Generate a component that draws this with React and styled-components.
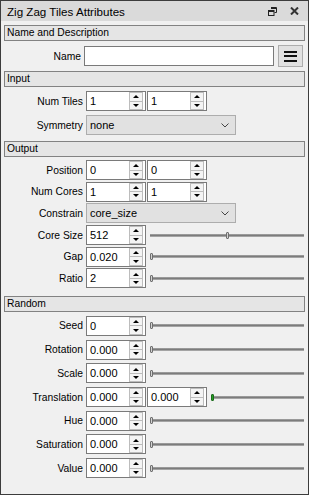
import styled, { createGlobalStyle } from 'styled-components';

const GlobalStyle = createGlobalStyle`
  html, body {
    margin: 0;
    padding: 0;
    background: #f0f0f0;
  }
  body {
    font-family: "Liberation Sans", Arial, sans-serif;
    color: #000;
  }
`;

const Panel = styled.div`
  width: 309px;
  height: 495px;
  box-sizing: border-box;
  border: 1px solid #3c3c3c;
  background: #f0f0f0;
  display: flex;
  flex-direction: column;
  overflow: hidden;
`;

const TitleBar = styled.div`
  height: 20px;
  flex: none;
  display: flex;
  align-items: center;
  padding: 0 9px 0 6px;
  background: #dadada;
  font-size: 11.6px;
`;

const TitleText = styled.div`
  flex: 1;
  white-space: nowrap;
`;

const TitleIcons = styled.div`
  display: flex;
  align-items: center;
  gap: 13px;
`;

const Body = styled.div`
  padding: 4px 3px 0 3px;
  display: flex;
  flex-direction: column;
`;

const SectionHeader = styled.div`
  height: 16px;
  box-sizing: border-box;
  border: 1px solid #828282;
  background: #e5e5e5;
  padding-left: 2px;
  font-size: 10.3px;
  line-height: 14px;
  white-space: nowrap;
`;

const Rows = styled.div`
  display: flex;
  flex-direction: column;
  gap: ${(p) => p.$gap}px;
  padding-top: ${(p) => p.$top}px;
  padding-bottom: ${(p) => p.$bottom}px;
`;

const Row = styled.div`
  display: grid;
  grid-template-columns: ${(p) => p.$labelWidth || 79}px 1fr;
  column-gap: ${(p) => p.$labelGap || 3}px;
  align-items: center;
  height: ${(p) => p.$height || 20}px;
`;

const Label = styled.div`
  text-align: right;
  font-size: 10.3px;
  white-space: nowrap;
`;

const Fields = styled.div`
  display: flex;
  align-items: center;
  gap: 1px;
  margin-right: ${(p) => p.$right || 0}px;
`;

const TextInput = styled.div`
  flex: 1;
  height: 20px;
  box-sizing: border-box;
  border: 1px solid #7a7a7a;
  background: #fff;
`;

const MenuButton = styled.div`
  width: 25px;
  height: 22px;
  box-sizing: border-box;
  margin-left: 3px;
  border: 1px solid #adadad;
  background: #e1e1e1;
  display: flex;
  flex-direction: column;
  align-items: center;
  justify-content: center;
  gap: 2.5px;

  & span {
    display: block;
    width: 13px;
    height: 2px;
    background: #111;
  }
`;

const SpinBox = styled.div`
  width: 60px;
  height: 20px;
  flex: none;
  box-sizing: border-box;
  border: 1px solid #7a7a7a;
  background: #fff;
  display: flex;
`;

const SpinValue = styled.div`
  flex: 1;
  padding-left: 3px;
  font-size: 11px;
  line-height: 18px;
  white-space: nowrap;
`;

const SpinButtons = styled.div`
  width: 14px;
  margin: 0 2px 0 0;
  display: flex;
  flex-direction: column;
`;

const SpinButton = styled.div`
  flex: 1;
  box-sizing: border-box;
  border: 1px solid #bcbcbc;
  background: #f4f4f4;
  display: flex;
  align-items: center;
  justify-content: center;

  & + & {
    border-top: none;
  }

  &::after {
    content: '';
    border-left: 3px solid transparent;
    border-right: 3px solid transparent;
    ${(p) => (p.$down ? 'border-top: 3px solid #000;' : 'border-bottom: 3px solid #000;')}
  }
`;

const Combo = styled.div`
  width: 150px;
  height: 20px;
  box-sizing: border-box;
  border: 1px solid #adadad;
  background: #e1e1e1;
  display: flex;
  align-items: center;
  justify-content: space-between;
  padding: 0 6px 0 3px;
  font-size: 11px;
`;

const Slider = styled.div`
  flex: 1;
  height: 20px;
  margin-left: 3px;
  margin-right: 1px;
  display: flex;
  align-items: center;
`;

const Track = styled.div`
  flex: 1;
  height: 3px;
  position: relative;
  background: linear-gradient(#a8a8a8, #7c7c7c 50%, #b8b8b8);
`;

const Handle = styled.div`
  position: absolute;
  top: -2px;
  width: 3px;
  height: 7px;
  box-sizing: border-box;
  border: 1px solid ${(p) => (p.$active ? '#1d6a1d' : '#6f6f6f')};
  background: ${(p) => (p.$active ? '#23a023' : '#d2d2d2')};
  border-radius: 1px;
`;

function Spin({ value }) {
  return (
    <SpinBox>
      <SpinValue>{value}</SpinValue>
      <SpinButtons>
        <SpinButton />
        <SpinButton $down />
      </SpinButtons>
    </SpinBox>
  );
}

function SliderBar({ pos = 0, active }) {
  return (
    <Slider>
      <Track>
        <Handle $active={active} style={{ left: `calc(${pos} * (100% - 3px))` }} />
      </Track>
    </Slider>
  );
}

function Chevron() {
  return (
    <svg width='8' height='5' viewBox='0 0 8 5'>
      <path d='M0.5 0.5 L4 4 L7.5 0.5' fill='none' stroke='#444' strokeWidth='1' />
    </svg>
  );
}

function RestoreIcon() {
  return (
    <svg width='9' height='9' viewBox='0 0 9 9'>
      <path d='M3 0.5 H8.5 V5.5 H6.5' fill='none' stroke='#222' strokeWidth='1' />
      <path d='M3 1.5 H8' stroke='#222' strokeWidth='1' />
      <rect x='0.5' y='3.5' width='5.5' height='5' fill='none' stroke='#222' strokeWidth='1' />
      <path d='M0.5 4.5 H6' stroke='#222' strokeWidth='1' />
    </svg>
  );
}

function CloseIcon() {
  return (
    <svg width='9' height='8' viewBox='0 0 9 8'>
      <path d='M1 0.5 L8 7.5 M8 0.5 L1 7.5' stroke='#333' strokeWidth='2' />
    </svg>
  );
}

const outputRows = [
  { label: 'Position', values: ['0', '0'] },
  { label: 'Num Cores', values: ['1', '1'] },
  { label: 'Constrain', combo: 'core_size' },
  { label: 'Core Size', values: ['512'], slider: 0.5 },
  { label: 'Gap', values: ['0.020'], slider: 0 },
  { label: 'Ratio', values: ['2'], slider: 0 },
];

const randomRows = [
  { label: 'Seed', values: ['0'], slider: 0 },
  { label: 'Rotation', values: ['0.000'], slider: 0 },
  { label: 'Scale', values: ['0.000'], slider: 0 },
  { label: 'Translation', values: ['0.000', '0.000'], slider: 0, active: true },
  { label: 'Hue', values: ['0.000'], slider: 0 },
  { label: 'Saturation', values: ['0.000'], slider: 0 },
  { label: 'Value', values: ['0.000'], slider: 0 },
];

function FieldRow({ row }) {
  return (
    <Row>
      <Label>{row.label}</Label>
      <Fields>
        {row.combo ? (
          <Combo>
            {row.combo}
            <Chevron />
          </Combo>
        ) : (
          row.values.map((v, i) => <Spin key={i} value={v} />)
        )}
        {row.slider !== undefined && <SliderBar pos={row.slider} active={row.active} />}
      </Fields>
    </Row>
  );
}

export default function App() {
  return (
    <>
      <GlobalStyle />
      <Panel>
        <TitleBar>
          <TitleText>Zig Zag Tiles Attributes</TitleText>
          <TitleIcons>
            <RestoreIcon />
            <CloseIcon />
          </TitleIcons>
        </TitleBar>
        <Body>
          <SectionHeader>Name and Description</SectionHeader>
          <Rows $gap={0} $top={4} $bottom={4}>
            <Row $labelWidth={77} $labelGap={3} $height={22}>
              <Label>Name</Label>
              <Fields $right={2}>
                <TextInput />
                <MenuButton>
                  <span />
                  <span />
                  <span />
                </MenuButton>
              </Fields>
            </Row>
          </Rows>

          <SectionHeader>Input</SectionHeader>
          <Rows $gap={4} $top={4} $bottom={6}>
            <FieldRow row={{ label: 'Num Tiles', values: ['1', '1'] }} />
            <FieldRow row={{ label: 'Symmetry', combo: 'none' }} />
          </Rows>

          <SectionHeader>Output</SectionHeader>
          <Rows $gap={1.7} $top={3} $bottom={7.5}>
            {outputRows.map((r) => (
              <FieldRow key={r.label} row={r} />
            ))}
          </Rows>

          <SectionHeader>Random</SectionHeader>
          <Rows $gap={3.7} $top={4} $bottom={0}>
            {randomRows.map((r) => (
              <FieldRow key={r.label} row={r} />
            ))}
          </Rows>
        </Body>
      </Panel>
    </>
  );
}
